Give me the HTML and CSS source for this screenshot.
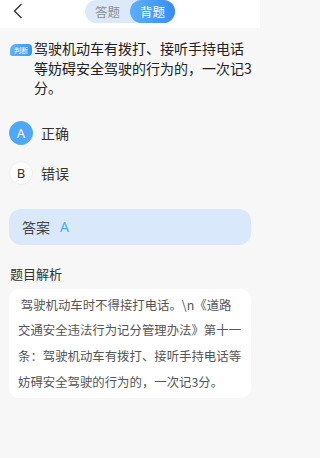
FILE: index.html
```html
<!DOCTYPE html>
<html lang="zh">
<head>
<meta charset="utf-8">
<link rel="stylesheet" href="styles.css">
</head>
<body>
<div class="page">
  <header class="header">
    <svg class="back" width="10" height="16" viewBox="0 0 10 16"><path d="M8.5 1 L1.5 8 L8.5 15" fill="none" stroke="#333" stroke-width="1.4"/></svg>
    <div class="toggle">
      <span class="seg">答题</span>
      <span class="seg seg-on">背题</span>
    </div>
  </header>
  <section class="question">
    <span class="badge">判断</span>
    <p class="qtext">驾驶机动车有拨打、接听手持电话等妨碍安全驾驶的行为的，一次记3分。</p>
  </section>
  <ul class="options">
    <li class="option"><span class="dot dot-on">A</span><span class="otext">正确</span></li>
    <li class="option"><span class="dot">B</span><span class="otext">错误</span></li>
  </ul>
  <div class="answer"><span class="alabel">答案</span><span class="aval">A</span></div>
  <h2 class="title">题目解析</h2>
  <div class="card">&nbsp;驾驶机动车时不得接打电话。\n《道路交通安全违法行为记分管理办法》第十一条：驾驶机动车有拨打、接听手持电话等妨碍安全驾驶的行为的，一次记3分。</div>
</div>
</body>
</html>
```
FILE: styles.css
```css
* { box-sizing: border-box; }
html, body { margin: 0; padding: 0; background: #f7f7f7; }
body {
  font-family: "Noto Sans CJK SC", "Noto Sans", sans-serif;
  width: 260px;
  height: 458px;
  overflow: hidden;
}
.page { display: flex; flex-direction: column; }
.header {
  height: 28px;
  background: #ffffff;
  position: relative;
  display: flex;
  justify-content: center;
}
.back { position: absolute; left: 13px; top: 3px; }
.toggle {
  display: flex;
  height: 23px;
  background: #dce9f8;
  border-radius: 12px;
  width: 90px;
}
.seg {
  flex: 1;
  display: flex;
  align-items: center;
  justify-content: center;
  font-size: 12.5px;
  color: #8a8f96;
  border-radius: 12px;
}
.seg-on {
  color: #ffffff;
  background: linear-gradient(90deg, #5bb0ff, #3a8bf2);
}
.question {
  display: flex;
  align-items: flex-start;
  padding: 11px 8px 0 10px;
}
.badge {
  flex: none;
  width: 22px;
  height: 12px;
  margin-top: 5px;
  margin-right: 2px;
  border-radius: 6px 4px 4px 2px;
  background: linear-gradient(90deg, #5cb3ff, #3e93f5);
  color: #fff;
  font-size: 7px;
  line-height: 12px;
  text-align: center;
}
.qtext {
  margin: 0;
  font-size: 14px;
  line-height: 19.5px;
  color: #222;
}
.options {
  list-style: none;
  margin: 0;
  padding: 23px 0 0 9px;
  display: flex;
  flex-direction: column;
  gap: 16px;
}
.option { display: flex; align-items: center; }
.dot {
  width: 24px;
  height: 24px;
  border-radius: 50%;
  background: #fcfcfc;
  border: 1px solid #efefef;
  display: flex;
  align-items: center;
  justify-content: center;
  font-family: "Noto Sans", sans-serif;
  font-size: 13px;
  color: #333;
}
.dot-on { background: #4fa7f7; border-color: #4fa7f7; color: #fff; }
.otext { margin-left: 8px; font-size: 14px; color: #333; }
.answer {
  margin: 24px 9px 0 9px;
  height: 36px;
  border-radius: 12px;
  background: #d9e9fb;
  display: flex;
  align-items: center;
  padding-left: 13px;
}
.alabel { font-size: 14px; color: #444; }
.aval { margin-left: 10px; font-family: "Noto Sans", sans-serif; font-size: 14px; color: #4ea6f5; }
.title {
  margin: 20px 0 0 10px;
  font-size: 13px;
  font-weight: normal;
  color: #333;
  line-height: 18px;
}
.card {
  margin: 6px 9px 0 9px;
  background: #ffffff;
  border-radius: 10px;
  padding: 4px 8px 3px 9px;
  font-size: 12.4px;
  line-height: 25.7px;
  color: #555;
}
```
